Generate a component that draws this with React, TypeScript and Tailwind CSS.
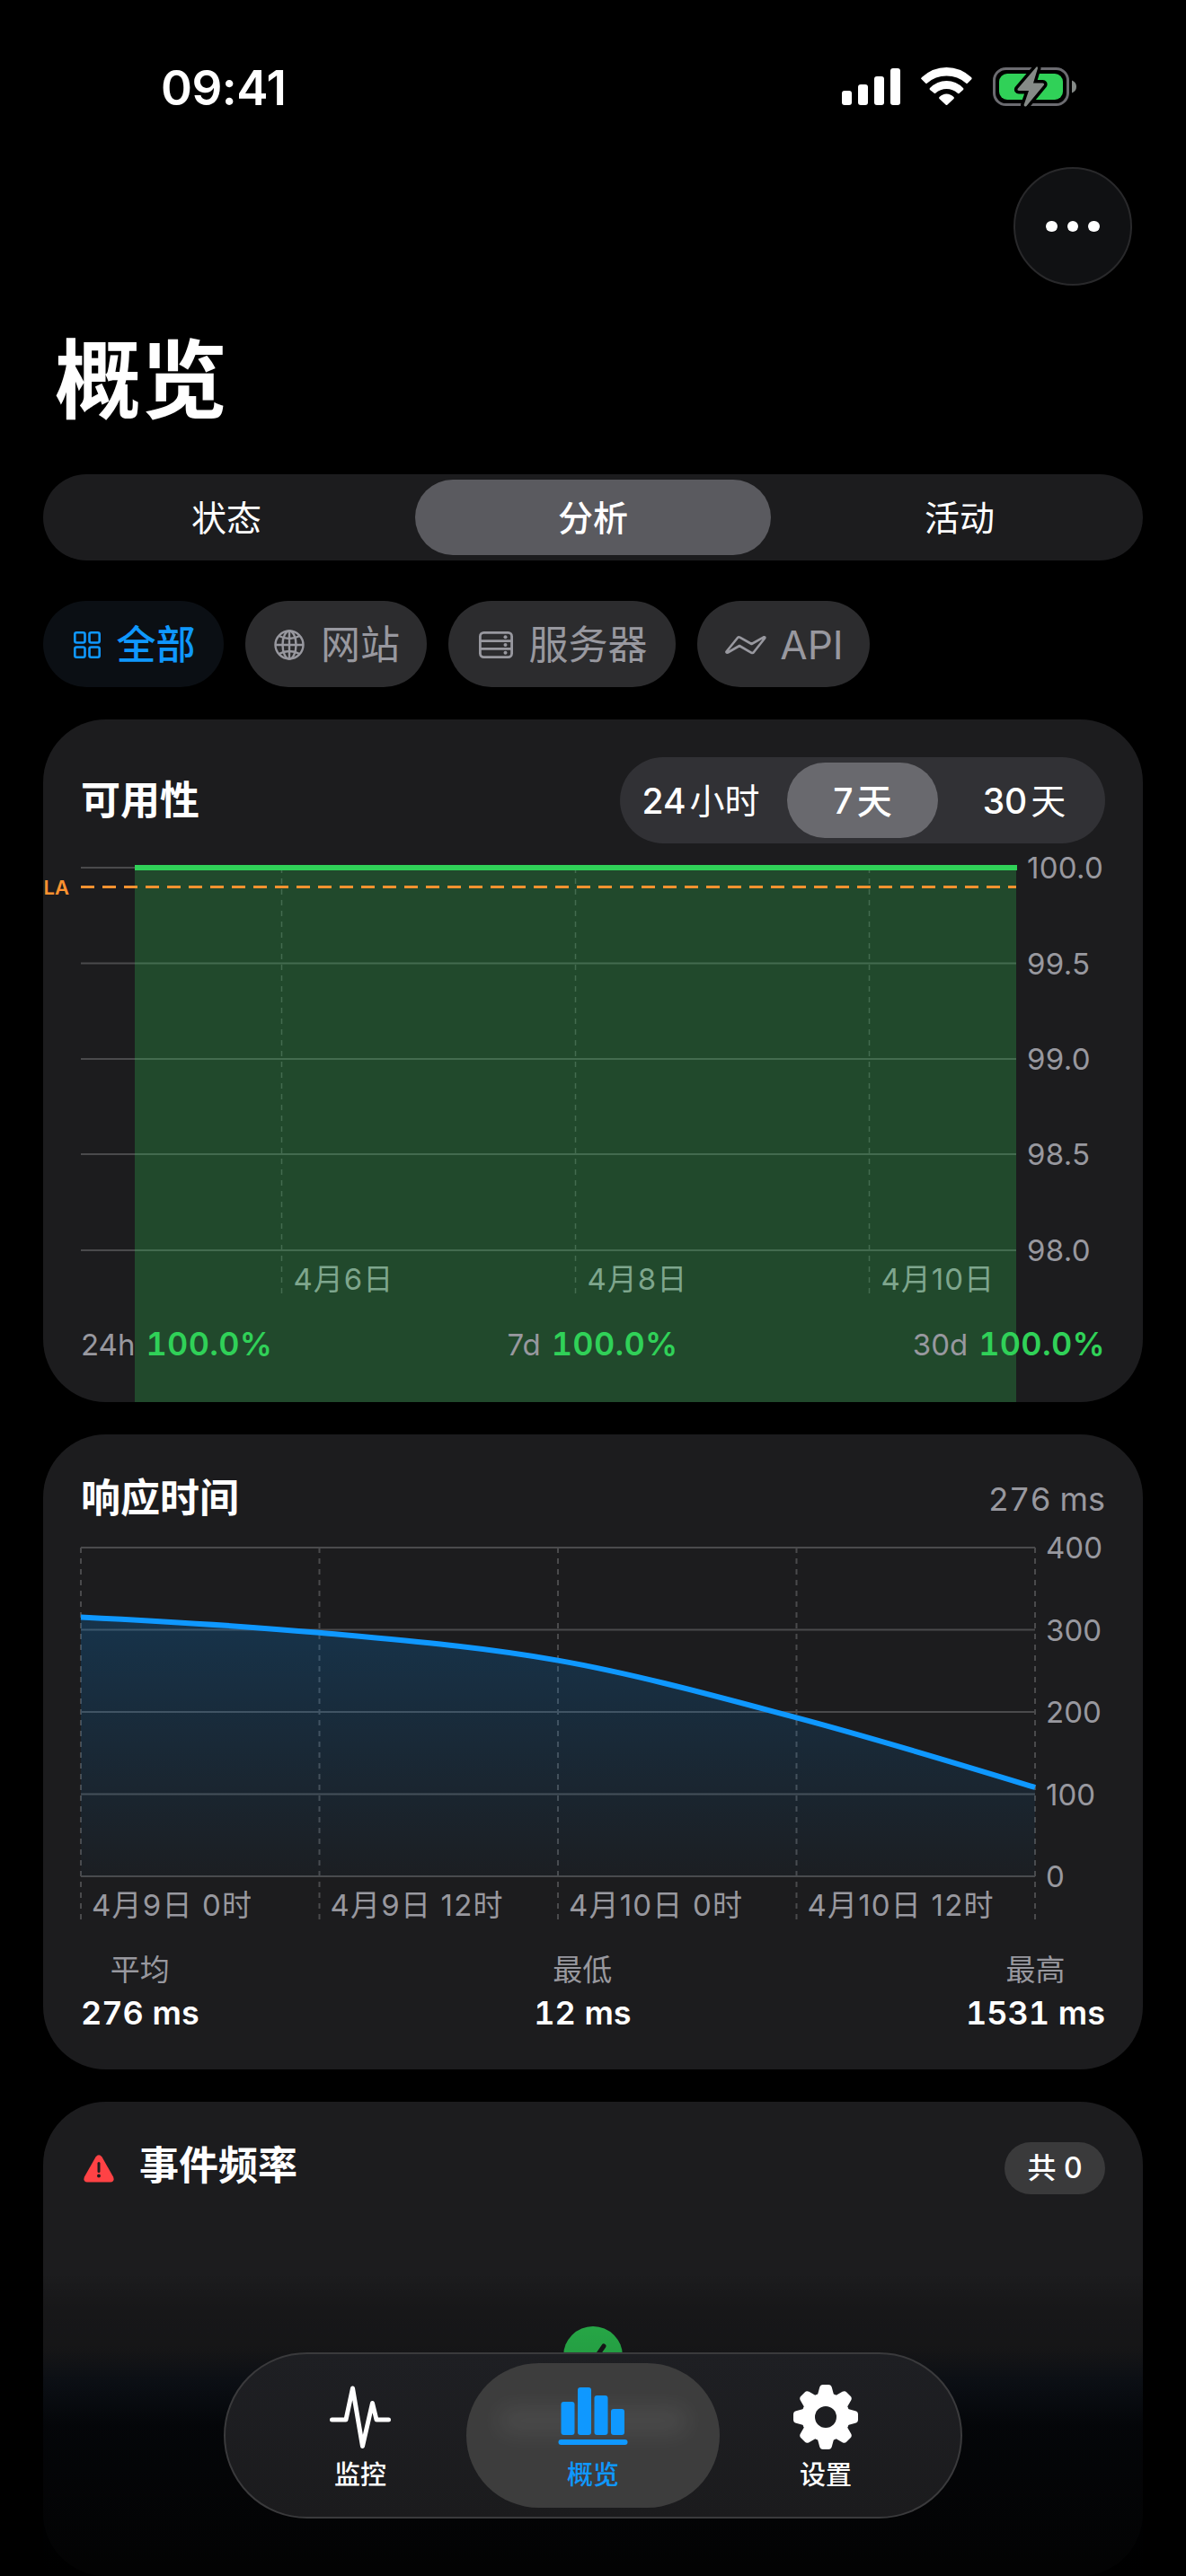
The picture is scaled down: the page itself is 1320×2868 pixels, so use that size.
import React from 'react';
import clsx from 'clsx';

const UPTIME_ROWS = [
  { label: '100.0', y: 27 },
  { label: '99.5', y: 133.5 },
  { label: '99.0', y: 240 },
  { label: '98.5', y: 346 },
  { label: '98.0', y: 453 },
];

const UPTIME_DAYS = [
  { label: '4月6日', x: 223.5 },
  { label: '4月8日', x: 550.5 },
  { label: '4月10日', x: 877.5 },
];

const LATENCY_ROWS = [
  { label: '400', y: 24 },
  { label: '300', y: 115.5 },
  { label: '200', y: 207 },
  { label: '100', y: 298.5 },
  { label: '0', y: 390 },
];

const LATENCY_HOURS = [
  { label: '4月9日 0时', x: 0 },
  { label: '4月9日 12时', x: 265.5 },
  { label: '4月10日 0时', x: 531 },
  { label: '4月10日 12时', x: 796.5 },
  { label: '', x: 1062 },
];

const LATENCY_CURVE =
  'M0 101.4 C88.5 105.8 177 110.8 265.5 118.8 C354 126.8 442.5 133.9 531 149.6 C619.5 165.3 708 189.9 796.5 213.4 C885 236.9 973.5 264 1062 291';

const StatusBar = () => (
  <div className="h-[186px] pt-[70px] pl-[131px] pr-[73px] flex justify-between items-start text-white">
    <div className="h-14 flex items-center text-[53px] font-semibold leading-none tracking-[-0.5px]">09:41</div>
    <svg className="mt-[3px]" width="265" height="50" viewBox="0 0 265 50">
      <g fill="#fff">
        <rect x="3" y="28" width="11" height="16" rx="3" />
        <rect x="21" y="21" width="11" height="23" rx="3" />
        <rect x="39" y="12" width="11" height="32" rx="3" />
        <rect x="57" y="3" width="11" height="41" rx="3" />
      </g>
      <g transform="translate(91 2)" fill="#fff">
        <path d="M0 12.5 Q0 12 1 11 Q13 0 28.500 0 Q44 0 56 11 Q57 12 56.500 13 L52 17.500 Q51 18.500 50 17.500 Q41 9.500 28.500 9.500 Q16 9.500 7 17.500 Q6 18.500 5 17.500 Z" />
        <path d="M10 23 Q18 15 28.500 15 Q39 15 47 23 Q48 24 47 25 L42.500 29 Q41.500 29.500 40.500 28.500 Q35.500 24 28.500 24 Q21.500 24 16.500 28.500 Q15.500 29.500 14.500 28.500 L10 25 Q9 24 10 23 Z" />
        <path d="M20.500 33 Q24 29.500 28.500 29.500 Q33 29.500 36.500 33 Q37.500 34 36.500 35 L29.500 41.500 Q28.500 42.500 27.500 41.500 L20.500 35 Q19.500 34 20.500 33 Z" />
      </g>
      <g transform="translate(171 2)">
        <rect x="1.500" y="1.500" width="82" height="40" rx="13" fill="none" stroke="#6b6b70" strokeWidth="3" />
        <rect x="7" y="7" width="71" height="29" rx="9" fill="#30d158" />
        <path d="M88 14.500 Q93 16.500 93 21.500 Q93 26.500 88 28.500 Z" fill="#858a87" />
        <path
          d="M48.500 -0.500 L27.500 24 Q27 26 29 26 H40 L34.500 42 Q35.500 44.500 37.500 43 L57 19.500 Q57.500 17.500 55.500 17.500 H45 L50 1 Q50 -1.500 48.500 -0.500 Z"
          fill="#858a87"
          stroke="#000"
          strokeWidth="7"
          strokeLinejoin="round"
          paintOrder="stroke"
        />
      </g>
    </svg>
  </div>
);

const GridIcon = () => (
  <svg width="30" height="30" viewBox="0 0 30 30" fill="none" stroke="currentColor" strokeWidth="2.600">
    <rect x="1.300" y="1.300" width="11.200" height="11.200" rx="2" />
    <rect x="17.500" y="1.300" width="11.200" height="11.200" rx="2" />
    <rect x="1.300" y="17.500" width="11.200" height="11.200" rx="2" />
    <rect x="17.500" y="17.500" width="11.200" height="11.200" rx="2" />
  </svg>
);

const GlobeIcon = () => (
  <svg width="34" height="34" viewBox="0 0 34 34" fill="none" stroke="currentColor" strokeWidth="2.400">
    <circle cx="17" cy="17" r="15.500" />
    <ellipse cx="17" cy="17" rx="7.500" ry="15.500" />
    <path d="M17 1.500V32.500M1.500 17H32.500M5.500 7Q17 13 28.500 7M5.500 27Q17 21 28.500 27" />
  </svg>
);

const ServerIcon = () => (
  <svg width="38" height="30" viewBox="0 0 38 30" fill="none" stroke="currentColor" strokeWidth="2.800">
    <rect x="1.400" y="1.400" width="35.200" height="27.200" rx="4" />
    <path d="M1.400 10.600H36.600M1.400 19.400H36.600" />
    <g fill="currentColor" stroke="none">
      <circle cx="29.500" cy="6.200" r="2" />
      <circle cx="29.500" cy="15" r="2" />
      <circle cx="29.500" cy="23.800" r="2" />
    </g>
  </svg>
);

const ApiIcon = () => (
  <svg
    width="46"
    height="22"
    viewBox="0 0 46 22"
    fill="none"
    stroke="currentColor"
    strokeWidth="2.600"
    strokeLinejoin="round"
  >
    <path d="M1.500 18.500 L14 3 Q15 1.800 16.500 2.600 L29.500 10 L43 2.300 Q44.800 2 44.200 3.500 L32 19 Q31 20.500 29.500 19.800 L16 12 L3 19.500 Q1 20 1.500 18.500 Z" />
  </svg>
);

const FILTERS = [
  { label: '全部', icon: <GridIcon />, active: true, box: 'w-[201px]', gap: 'gap-[18px]' },
  { label: '网站', icon: <GlobeIcon />, active: false, box: 'w-[202px]', gap: 'gap-[18px]' },
  { label: '服务器', icon: <ServerIcon />, active: false, box: 'w-[253px]', gap: 'gap-[18px]' },
  { label: 'API', icon: <ApiIcon />, active: false, box: 'w-[192px]', gap: 'gap-[15px]' },
];

const Filters = () => (
  <div className="mt-[45px] flex gap-6">
    {FILTERS.map((f) => (
      <button
        key={f.label}
        className={clsx(
          'h-24 pt-px pl-0.5 rounded-full flex items-center justify-center text-[44px] leading-none',
          f.box,
          f.gap,
          f.active ? 'bg-[#0b0f14] text-[#0f98ff] font-medium' : 'bg-[#2c2c2e] text-[#98989f]'
        )}
      >
        {f.icon}
        <span>{f.label}</span>
      </button>
    ))}
  </div>
);

const Tabs = () => (
  <div className="h-24 p-1.5 rounded-full bg-[#1c1c1e] flex justify-between text-[39px] leading-none">
    {['状态', '分析', '活动'].map((t) => (
      <button
        key={t}
        className={clsx(
          'w-[396px] rounded-full flex items-center justify-center',
          t === '分析' && 'bg-[#5a5a5f] font-medium'
        )}
      >
        {t}
      </button>
    ))}
  </div>
);

const RangePicker = () => (
  <div className="w-[540px] h-24 p-1.5 rounded-full bg-[#313135] flex justify-between text-[39px] leading-none">
    {[
      ['24', '小时'],
      ['7', '天'],
      ['30', '天'],
    ].map(([n, unit]) => (
      <button
        key={n}
        className={clsx(
          'w-[168px] rounded-full flex items-center justify-center gap-1',
          n === '7' && 'bg-[#69696e] font-medium'
        )}
      >
        <span className="font-medium">{n}</span>
        <span>{unit}</span>
      </button>
    ))}
  </div>
);

const UptimeCard = () => (
  <section className="mt-9 h-[760px] rounded-[70px] bg-[#1c1c1e] overflow-hidden px-[42px] pt-[42px]">
    <div className="flex items-center justify-between">
      <h3 className="text-[44px] font-semibold leading-none">可用性</h3>
      <RangePicker />
    </div>
    <svg className="block overflow-visible" width="1140" height="511" viewBox="0 0 1140 511">
      <g stroke="#4a4a4c" strokeWidth="2">
        {UPTIME_ROWS.map((r) => (
          <line key={r.label} x1="0" x2="1041" y1={r.y} y2={r.y} />
        ))}
        {UPTIME_DAYS.map((d) => (
          <line key={d.label} x1={d.x} x2={d.x} y1="27" y2="501" strokeWidth="1.500" strokeDasharray="6 6" />
        ))}
      </g>
      <g fill="#98989f" fontSize="33">
        {UPTIME_ROWS.map((r) => (
          <text key={r.label} x="1053" y={r.y + 12} letterSpacing="0.3">{r.label}</text>
        ))}
        {UPTIME_DAYS.map((d) => (
          <text key={d.label} x={d.x + 13} y="497" className="tracking-[1px] [text-autospace:no-autospace]">
            {d.label}
          </text>
        ))}
      </g>
      <rect x="60" y="27" width="981" height="595" fill="#30d158" fillOpacity="0.25" />
      <line x1="60" x2="1042" y1="27" y2="27" stroke="#30d158" strokeWidth="6" />
      <line x1="0" x2="1041" y1="48.500" y2="48.500" stroke="#ff9230" strokeWidth="3" strokeDasharray="15 9" />
      <text x="-13" y="56.500" textAnchor="end" fontSize="22" fontWeight="600" fill="#ff9230">LA</text>
    </svg>
    <div className="relative h-[92px] flex items-center justify-between text-[33px] leading-none text-[#98989f]">
      {['24h', '7d', '30d'].map((l) => (
        <div key={l} className="flex items-baseline gap-3">
          <span>{l}</span>
          <span className="text-[36px] font-semibold text-[#30d158] tabular-nums tracking-[0.3px]">100.0%</span>
        </div>
      ))}
    </div>
  </section>
);

const LATENCY_STATS = [
  { label: '平均', value: '276 ms' },
  { label: '最低', value: '12 ms' },
  { label: '最高', value: '1531 ms' },
];

const LatencyCard = () => (
  <section className="mt-9 h-[707px] rounded-[70px] bg-[#1c1c1e] px-[42px] pt-[42px]">
    <div className="h-[60px] flex items-center justify-between">
      <h3 className="text-[44px] font-semibold leading-none pb-0.5">响应时间</h3>
      <span className="text-[36px] leading-none text-[#98989f] tabular-nums">276 ms</span>
    </div>
    <svg className="block overflow-visible" width="1140" height="470" viewBox="0 0 1140 470">
      <defs>
        <linearGradient id="latency-fill" x1="0" y1="101" x2="0" y2="390" gradientUnits="userSpaceOnUse">
          <stop offset="0" stopColor="#0091ff" stopOpacity="0.2" />
          <stop offset="1" stopColor="#0091ff" stopOpacity="0.02" />
        </linearGradient>
      </defs>
      <g stroke="#4a4a4c" strokeWidth="2">
        {LATENCY_ROWS.map((r) => (
          <line key={r.label} x1="0" x2="1062" y1={r.y} y2={r.y} />
        ))}
        {LATENCY_HOURS.map((h) => (
          <line key={h.x} x1={h.x} x2={h.x} y1="24" y2="438" strokeDasharray="6 6" />
        ))}
      </g>
      <g fill="#98989f" fontSize="33">
        {LATENCY_ROWS.map((r) => (
          <text key={r.label} x="1074" y={r.y + 12}>{r.label}</text>
        ))}
        {LATENCY_HOURS.map((h) => (
          <text key={h.x} x={h.x + 12} y="434" className="tracking-[1.2px] [text-autospace:no-autospace]">
            {h.label}
          </text>
        ))}
      </g>
      <path d={`${LATENCY_CURVE} V390 H0 Z`} fill="url(#latency-fill)" />
      <path d={LATENCY_CURVE} fill="none" stroke="#0f98ff" strokeWidth="6" />
    </svg>
    <div className="flex justify-between leading-none">
      {LATENCY_STATS.map((s) => (
        <div key={s.label} className="flex flex-col items-center gap-[13px] pt-2">
          <span className="text-[33px] text-[#98989f]">{s.label}</span>
          <span className="text-[36px] font-semibold tabular-nums">{s.value}</span>
        </div>
      ))}
    </div>
  </section>
);

const IncidentCard = () => (
  <section className="mt-9 h-[528px] rounded-[70px] bg-[#1c1c1e] px-[42px] pt-[45px]">
    <div className="h-[58px] flex items-center">
      <svg className="ml-[3px] mt-px" width="34" height="31" viewBox="0 0 34 31">
        <path d="M13.500 2.500 Q17 -2 20.500 2.500 L33 24.500 Q35 30 30 30.500 H4 Q-1 30 1 24.500 Z" fill="#ff4245" />
        <path d="M17 9.500V18.500" stroke="#1c1c1e" strokeWidth="3" strokeLinecap="round" />
        <circle cx="17" cy="23.500" r="2" fill="#1c1c1e" />
      </svg>
      <h3 className="ml-7 pb-1.5 flex-1 text-[44px] font-semibold leading-none">事件频率</h3>
      <span className="w-[112px] h-[58px] rounded-full bg-[#3a3a3b] flex items-center justify-center text-[32px] font-medium leading-none">
        共 0
      </span>
    </div>
    <svg className="block mx-auto mt-[147px]" width="66" height="66" viewBox="0 0 66 66">
      <circle cx="33" cy="33" r="33" fill="#30d158" />
      <path d="M19 34L29 45L45 22" fill="none" stroke="#1c1c1e" strokeWidth="5" strokeLinecap="round" strokeLinejoin="round" />
    </svg>
  </section>
);

const PulseIcon = () => (
  <svg width="68" height="72" viewBox="0 0 68 72" fill="none" stroke="currentColor" strokeWidth="5" strokeLinecap="round" strokeLinejoin="round">
    <path d="M2.500 39H18L25.500 4L36.500 68.500L47.500 20.500L52 39H65.500" />
  </svg>
);

const BarsIcon = () => (
  <svg width="78" height="72" viewBox="0 0 78 72" fill="currentColor">
    <rect x="3.500" y="19" width="15" height="37" rx="3" />
    <rect x="22" y="3" width="15" height="53" rx="3" />
    <rect x="40.500" y="12" width="15" height="44" rx="3" />
    <rect x="59" y="27" width="15" height="29" rx="3" />
    <rect x="0.500" y="61" width="77" height="6" rx="3" />
  </svg>
);

const GearIcon = () => (
  <svg width="72" height="72" viewBox="0 0 72 72" fill="currentColor">
    <defs>
      <mask id="gear-hole">
        <rect width="72" height="72" fill="#fff" />
        <circle cx="36" cy="36" r="12" fill="#000" />
      </mask>
    </defs>
    <g mask="url(#gear-hole)">
      <circle cx="36" cy="36" r="27" />
      {[0, 45, 90, 135, 180, 225, 270, 315].map((a) => (
        <path key={a} d="M26.500 13L29.200 3Q30 0 33 0H39Q42 0 42.800 3L45.500 13Z" transform={`rotate(${a} 36 36)`} />
      ))}
    </g>
  </svg>
);

const NAV = [
  { label: '监控', icon: <PulseIcon /> },
  { label: '概览', icon: <BarsIcon /> },
  { label: '设置', icon: <GearIcon /> },
];

const NavBar = () => (
  <nav className="absolute left-[249px] top-[2619px] w-[822px] h-[185px] rounded-full border-2 border-[#3a3a3c] bg-linear-to-b from-[#1e1f23] to-[#1b1b1d] py-2.5 flex justify-center">
    {NAV.map((n) => (
      <button
        key={n.label}
        className={clsx(
          'relative shrink-0 rounded-full flex flex-col items-center pt-6 gap-[14px] text-[29px] font-medium leading-none',
          n.label === '概览' ? 'w-[282px] bg-[#3d3d3d] text-[#0f98ff]' : 'w-[236px] text-white'
        )}
      >
        {n.label === '概览' && <i className="absolute left-9 top-[50px] w-[210px] h-7 rounded-full bg-white/7 blur-md" />}
        <span className="relative">{n.icon}</span>
        <span>{n.label}</span>
      </button>
    ))}
  </nav>
);

const App = () => {
  return (
    <div className="relative w-[1320px] h-[2868px] overflow-hidden bg-black px-12 text-white font-['Inter','Noto_Sans_CJK_SC',sans-serif]">
      <StatusBar />
      <div className="flex justify-end pr-3">
        <button className="size-[132px] rounded-full border-2 border-[#29292b] bg-[#101113] flex items-center justify-center gap-[11px]">
          <i className="size-[12.5px] rounded-full bg-white" />
          <i className="size-[12.5px] rounded-full bg-white" />
          <i className="size-[12.5px] rounded-full bg-white" />
        </button>
      </div>
      <h1 className="h-[210px] pt-[57px] pl-[13px] text-[96px] font-bold leading-none">概览</h1>
      <Tabs />
      <Filters />
      <UptimeCard />
      <LatencyCard />
      <IncidentCard />
      <div className="absolute inset-x-12 bottom-0 h-[348px] bg-[linear-gradient(to_bottom,transparent_3%,rgb(0_0_0/0.18)_14%,rgb(0_0_0/0.24)_28%,rgb(4_9_16/0.7)_38%,rgb(0_2_5/0.85)_52%,rgb(0_0_0/0.9)_100%)]" />
      <NavBar />
    </div>
  );
};

export default App;
